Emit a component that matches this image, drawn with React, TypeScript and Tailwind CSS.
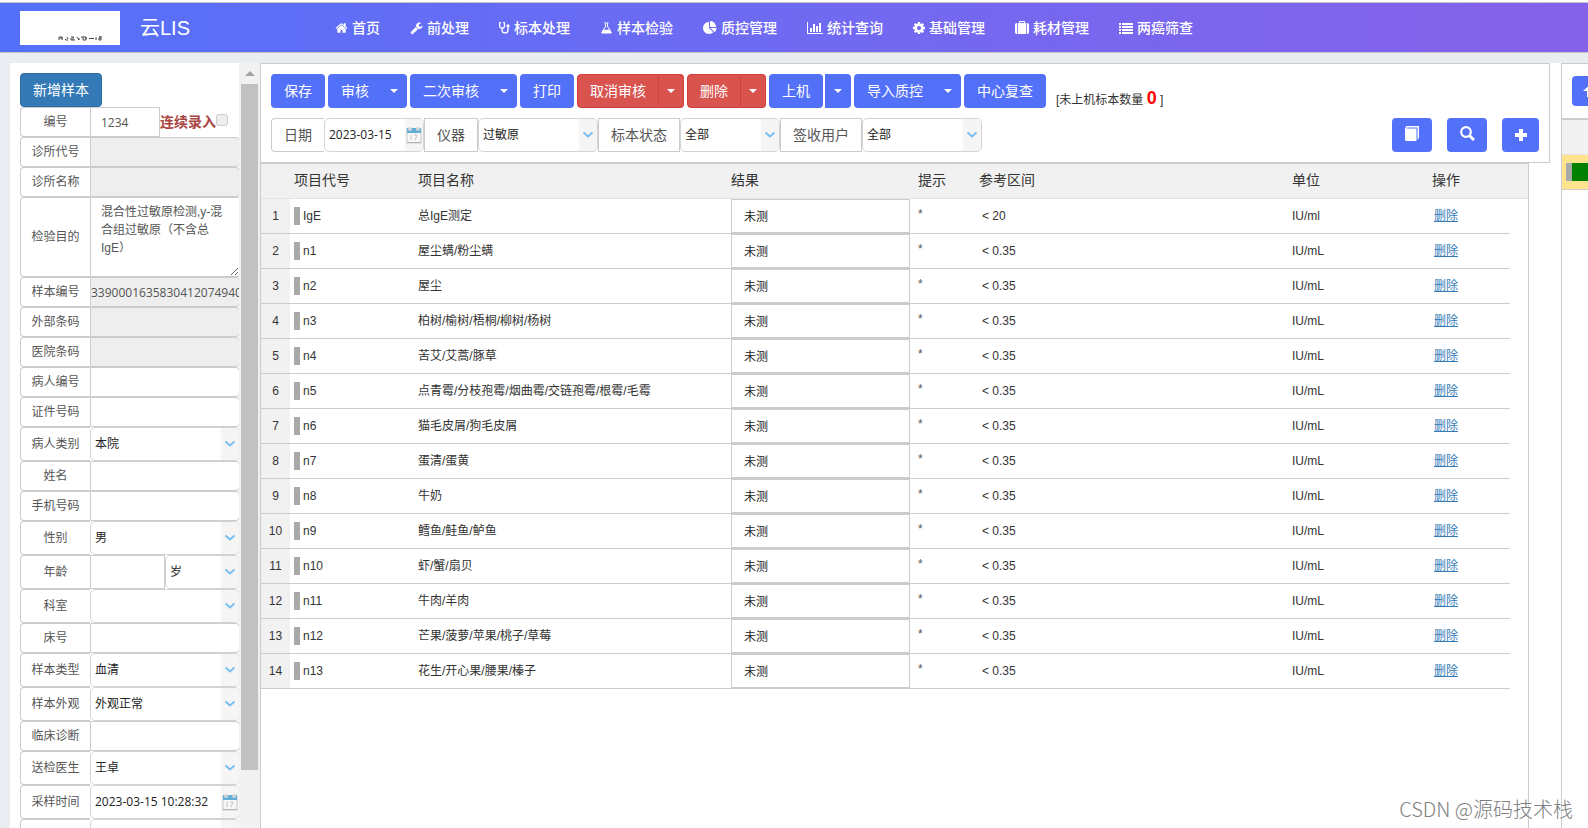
import { useState } from "react"
import type { ReactNode } from "react"

type NavEntry = {
  label: string
  width: number
  box: string
  icon: ReactNode
}

type FieldType = "text" | "readonly" | "select" | "purpose" | "number" | "age" | "datetime"

type Field = {
  label: string
  type: FieldType
  value?: string
}

const NAV: NavEntry[] = [
  {
    label: "首页",
    width: 13,
    box: "0 0 1792 1792",
    icon: <path d="M1472 992v480q0 26-19 45t-45 19h-384v-384h-256v384h-384q-26 0-45-19t-19-45v-480q0-1 .5-3t.5-3l575-474 575 474q1 2 1 6zm223-69l-62 74q-8 9-21 11h-3q-13 0-21-7l-692-577-692 577q-12 8-24 7-13-2-21-11l-62-74q-8-10-7-23.5t11-21.5l719-599q32-26 76-26t76 26l244 204v-195q0-14 9-23t23-9h192q14 0 23 9t9 23v408l219 182q10 8 11 21.5t-7 23.5z" />
  },
  {
    label: "前处理",
    width: 13,
    box: "0 0 1792 1792",
    icon: <path d="M448 1472q0-26-19-45t-45-19-45 19-19 45 19 45 45 19 45-19 19-45zm644-420l-682 682q-37 37-90 37-52 0-91-37l-106-108q-38-36-38-90 0-53 38-91l681-681q39 98 114.5 173.5t173.5 114.5zm634-435q0 39-23 106-47 134-164.5 217.5t-258.5 83.5q-185 0-316.5-131.5t-131.5-316.5 131.5-316.5 316.5-131.5q58 0 121.5 16.5t107.5 46.5q16 11 16 28t-16 28l-293 169v224l193 107q5-3 79-48.5t135.5-81 70.5-35.5q15 0 23.5 10t8.5 25z" />
  },
  {
    label: "标本处理",
    width: 11,
    box: "0 0 1408 1792",
    icon: (
      <g fill="none" stroke="currentColor" strokeWidth="170" strokeLinecap="round" strokeLinejoin="round">
        <path d="M190 210H80v420q0 270 310 290 310-20 310-290V210H590" />
        <path d="M390 930v240q0 350 380 350t380-350V780" />
        <circle cx="1150" cy="620" r="130" />
      </g>
    )
  },
  {
    label: "样本检验",
    width: 13,
    box: "0 0 1792 1792",
    icon: <path d="M1591 1448q56 89 21.5 152.5t-140.5 63.5h-1152q-106 0-140.5-63.5t21.5-152.5l503-793v-399h-64q-26 0-45-19t-19-45 19-45 45-19h512q26 0 45 19t19 45-19 45-45 19h-64v399zm-779-725l-272 429h712l-272-429-20-31v-436h-128v436z" />
  },
  {
    label: "质控管理",
    width: 14,
    box: "0 0 1792 1792",
    icon: <path d="M768 890l546 546q-106 108-247.5 168t-298.5 60q-209 0-385.5-103t-279.5-279.5-103-385.5 103-385.5 279.5-279.5 385.5-103v762zm187 6h773q0 157-60 298.5t-168 247.5zm709-128h-768v-768q209 0 385.5 103t279.5 279.5 103 385.5z" />
  },
  {
    label: "统计查询",
    width: 16,
    box: "0 0 2048 1792",
    icon: <path d="M640 896v512h-256v-512h256zm384-512v1024h-256v-1024h256zm1024 1152v128h-2048v-1536h128v1408h1920zm-640-896v768h-256v-768h256zm384-384v1152h-256v-1152h256z" />
  },
  {
    label: "基础管理",
    width: 12,
    box: "128 128 1536 1536",
    icon: <path d="M1152 896q0-106-75-181t-181-75-181 75-75 181 75 181 181 75 181-75 75-181zm512-109v222q0 12-8 23t-20 13l-185 28q-19 54-39 91 35 50 107 138 10 12 10 25t-9 23q-27 37-99 108t-94 71q-12 0-26-9l-138-108q-44 23-91 38-16 136-29 186-7 28-36 28h-222q-14 0-24.5-8.5t-11.5-21.5l-28-184q-49-16-90-37l-141 107q-10 9-25 9-14 0-25-11-126-114-165-168-7-10-7-23 0-12 8-23 15-21 51-66.5t54-70.5q-27-50-41-99l-183-27q-13-2-21-12.5t-8-23.5v-222q0-12 8-23t19-13l186-28q14-46 39-92-40-57-107-138-10-12-10-24 0-10 9-23 26-36 98.5-107.5t94.5-71.5q13 0 26 10l138 107q44-23 91-38 16-136 29-186 7-28 36-28h222q14 0 24.5 8.5t11.5 21.5l28 184q49 16 90 37l142-107q9-9 24-9 13 0 25 10 129 119 165 170 7 8 7 22 0 12-8 23-15 21-51 66.5t-54 70.5q26 50 41 98l183 28q13 2 21 12.5t8 23.5z" />
  },
  {
    label: "耗材管理",
    width: 14,
    box: "0 0 1792 1792",
    icon: <path d="M640 256h512v-128h-512v128zm-352 0v1408h-64q-92 0-158-66t-66-158v-960q0-92 66-158t158-66h64zm1120 0v1408h-1024v-1408h128v-160q0-40 28-68t68-28h576q40 0 68 28t28 68v160h128zm384 224v960q0 92-66 158t-158 66h-64v-1408h64q92 0 158 66t66 158z" />
  },
  {
    label: "两癌筛查",
    width: 14,
    box: "0 0 14 14",
    icon: <path d="M0 2h2v2H0zM3 2h11v2H3zM0 5h2v2H0zM3 5h11v2H3zM0 8h2v2H0zM3 8h11v2H3zM0 11h2v2H0zM3 11h11v2H3z" />
  }
]

const FIELDS: Field[] = [
  { label: "编号", type: "number", value: "1234" },
  { label: "诊所代号", type: "readonly" },
  { label: "诊所名称", type: "readonly" },
  { label: "检验目的", type: "purpose", value: "混合性过敏原检测,y-混合组过敏原（不含总IgE）" },
  { label: "样本编号", type: "readonly", value: "3390001635830412074940" },
  { label: "外部条码", type: "readonly" },
  { label: "医院条码", type: "readonly" },
  { label: "病人编号", type: "text" },
  { label: "证件号码", type: "text" },
  { label: "病人类别", type: "select", value: "本院" },
  { label: "姓名", type: "text" },
  { label: "手机号码", type: "text" },
  { label: "性别", type: "select", value: "男" },
  { label: "年龄", type: "age", value: "岁" },
  { label: "科室", type: "select", value: "" },
  { label: "床号", type: "text" },
  { label: "样本类型", type: "select", value: "血清" },
  { label: "样本外观", type: "select", value: "外观正常" },
  { label: "临床诊断", type: "text" },
  { label: "送检医生", type: "select", value: "王卓" },
  { label: "采样时间", type: "datetime", value: "2023-03-15 10:28:32" },
  { label: "", type: "datetime", value: "" }
]

const ITEMS = [
  { code: "IgE", name: "总IgE测定", range: "< 20", unit: "IU/ml" },
  { code: "n1", name: "屋尘螨/粉尘螨", range: "< 0.35", unit: "IU/mL" },
  { code: "n2", name: "屋尘", range: "< 0.35", unit: "IU/mL" },
  { code: "n3", name: "柏树/榆树/梧桐/柳树/杨树", range: "< 0.35", unit: "IU/mL" },
  { code: "n4", name: "苦艾/艾蒿/豚草", range: "< 0.35", unit: "IU/mL" },
  { code: "n5", name: "点青霉/分枝孢霉/烟曲霉/交链孢霉/根霉/毛霉", range: "< 0.35", unit: "IU/mL" },
  { code: "n6", name: "猫毛皮屑/狗毛皮屑", range: "< 0.35", unit: "IU/mL" },
  { code: "n7", name: "蛋清/蛋黄", range: "< 0.35", unit: "IU/mL" },
  { code: "n8", name: "牛奶", range: "< 0.35", unit: "IU/mL" },
  { code: "n9", name: "鳕鱼/鲑鱼/鲈鱼", range: "< 0.35", unit: "IU/mL" },
  { code: "n10", name: "虾/蟹/扇贝", range: "< 0.35", unit: "IU/mL" },
  { code: "n11", name: "牛肉/羊肉", range: "< 0.35", unit: "IU/mL" },
  { code: "n12", name: "芒果/菠萝/苹果/桃子/草莓", range: "< 0.35", unit: "IU/mL" },
  { code: "n13", name: "花生/开心果/腰果/榛子", range: "< 0.35", unit: "IU/mL" }
]

function CalendarIcon() {
  return (
    <svg width="16" height="18" viewBox="0 0 16 18" aria-hidden="true">
      <rect x="1" y="3" width="14" height="14" fill="#f7f7f7" stroke="#c9c9c9" />
      <rect x="1" y="2" width="14" height="5" fill="#62aed6" />
      <circle cx="4" cy="3" r="2" fill="#d4d4d4" />
      <circle cx="12" cy="3" r="2" fill="#d4d4d4" />
      <path d="M5 9v5M8 9h3l-2 5" fill="none" stroke="#c4c4c4" />
      <path d="M1 16.5h14" stroke="#b5b5b5" />
    </svg>
  )
}

function Combo({ label, value, className }: { label: string; value: string; className: string }) {
  return (
    <div className={`relative flex h-[34px] overflow-hidden rounded-[5px] border border-[#d4d4d4] bg-white ${className}`}>
      <select
        aria-label={label}
        defaultValue={value}
        className="w-full min-w-0 appearance-none bg-transparent pl-1 text-xs text-[#222] outline-none"
      >
        <option>{value}</option>
      </select>
      <span className="pointer-events-none absolute inset-y-0 right-0 flex w-[18px] items-center justify-center bg-[#f5f5f5]">
        <svg width="12" height="8" viewBox="0 0 12 8" aria-hidden="true">
          <path d="M1.500 1.500L6 5.500L10.500 1.500" fill="none" stroke="#78bff0" strokeWidth="2" />
        </svg>
      </span>
    </div>
  )
}

function DateBox({ label, value, className }: { label: string; value: string; className: string }) {
  return (
    <div className={`flex h-[34px] overflow-hidden rounded-[5px] border border-[#d4d4d4] bg-white ${className}`}>
      <input
        aria-label={label}
        defaultValue={value}
        className="w-full min-w-0 flex-1 pl-1 font-['Open_Sans','Noto_Sans_CJK_SC',sans-serif] text-xs text-[#222] outline-none"
      />
      <button aria-label="选择日期" className="flex w-[18px] shrink-0 items-center justify-center bg-[#f5f5f5]">
        <CalendarIcon />
      </button>
    </div>
  )
}

function FieldControl({ field, id }: { field: Field; id: string }) {

  const [checked, setChecked] = useState(false)

  if (field.type === "select") {
    return <Combo label={field.label} value={field.value ?? ""} className="flex-1" />
  }

  if (field.type === "datetime") {
    return <DateBox label={field.label || "时间"} value={field.value ?? ""} className="flex-1" />
  }

  if (field.type === "age") {
    return (
      <>
        <input id={id} className="w-[75px] border border-[#ccc] outline-none" />
        <Combo label="年龄单位" value="岁" className="flex-1" />
      </>
    )
  }

  if (field.type === "number") {
    return (
      <>
        <input
          id={id}
          defaultValue={field.value}
          className="h-[30px] w-[70px] border border-[#ccc] pl-2.5 font-['Open_Sans',sans-serif] text-xs text-[#555] outline-none"
        />
        <label className="flex items-center text-sm font-bold text-[#a94442]">
          连续录入
          <input
            type="checkbox"
            checked={checked}
            onChange={(e) => setChecked(e.target.checked)}
            className="mb-1 size-3 appearance-none rounded-[3px] border border-[#ccc] bg-[#eee]"
          />
        </label>
      </>
    )
  }

  if (field.type === "purpose") {
    return (
      <textarea
        id={id}
        defaultValue={field.value}
        className="h-[80px] min-w-0 flex-1 resize overflow-hidden border border-[#ccc] px-2.5 py-[5px] text-xs leading-[18px] text-[#555] outline-none"
      />
    )
  }

  if (field.type === "readonly") {
    return (
      <input
        id={id}
        readOnly
        defaultValue={field.value}
        className="h-[30px] min-w-0 flex-1 rounded-r border border-[#ccc] bg-[#eee] font-['Open_Sans',sans-serif] text-xs text-[#555] outline-none"
      />
    )
  }

  return (
    <input
      id={id}
      defaultValue={field.value}
      className="h-[30px] min-w-0 flex-1 rounded-r border border-[#ccc] px-2.5 text-xs text-[#555] outline-none"
    />
  )

}

function Caret() {
  return <span className="size-0 border-x-4 border-t-4 border-x-transparent border-t-white" />
}

function BlueButton({ text, caret }: { text: string; caret?: boolean }) {
  return (
    <button className="flex h-[34px] items-center rounded bg-[#5370f9] pl-[13px] text-sm whitespace-nowrap text-white">
      <span className="pr-[13px]">{text}</span>
      {caret && (
        <span className="flex w-[25px] justify-center pr-px">
          <Caret />
        </span>
      )}
    </button>
  )
}

function RedButton({ text }: { text: string }) {
  return (
    <div className="flex h-[34px] text-sm whitespace-nowrap text-white">
      <button className="rounded-l border border-[#d43f3a] bg-[#d9534f] px-3">{text}</button>
      <button
        aria-label={`${text}选项`}
        className="flex w-[25px] items-center justify-center rounded-r border border-l-0 border-[#d43f3a] bg-[#d9534f]"
      >
        <Caret />
      </button>
    </div>
  )
}

function FilterLabel({ text, className }: { text: string; className: string }) {
  return (
    <span className={`flex h-[34px] items-center justify-center border border-[#ccc] text-sm whitespace-nowrap text-[#555] ${className}`}>
      {text}
    </span>
  )
}

function Header() {
  return (
    <header className="mt-0.5 flex h-[51px] shrink-0 items-center border-y border-[#c5c5cb] bg-gradient-to-r from-[#5370f9] to-[#8662ea] pl-5 text-white">

      <div className="flex h-[34px] w-[100px] shrink-0 items-end justify-end bg-white pr-[18px] pb-1">
        <svg width="44" height="5" viewBox="0 0 44 5" stroke="#444" fill="none" aria-hidden="true">
          <path d="M1 1h3v3M1 1v3M2 2h3M7 3l1 1h2M9 1l1 2M13 1h3M13 2v2h4M15 1v3M19 1l2 3M23 1h2v3M20 3h2M25 1h3v3h-3M27 2h2M31 2.500h5M38 1v3M41 1h3M40 3h4M42 0v5" />
        </svg>
      </div>

      <div className="w-[200px] shrink-0 pl-5 text-xl">云LIS</div>

      <nav className="flex">
        {NAV.map((item) => (
          <a key={item.label} href="#" className="flex items-center gap-1 px-[15px] text-sm font-medium whitespace-nowrap">
            <svg width={item.width} height="14" viewBox={item.box} fill="currentColor" aria-hidden="true">
              {item.icon}
            </svg>
            {item.label}
          </a>
        ))}
      </nav>

    </header>
  )
}

function Sidebar() {
  return (
    <aside className="flex w-[250px] shrink-0 bg-white">

      <div className="w-[229px] shrink-0 overflow-hidden">
        <div className="w-[230px] pt-2.5 pl-2.5">
          <button className="h-[34px] w-[82px] rounded border border-[#2e6da4] bg-[#337ab7] text-sm text-white">
            新增样本
          </button>
          {FIELDS.map((field, i) => (
            <div key={i} className="flex">
              <label
                htmlFor={`field-${i}`}
                className="flex w-[70px] shrink-0 items-center justify-center rounded-l border border-r-0 border-[#ccc] text-xs text-[#555]"
              >
                {field.label}
              </label>
              <FieldControl field={field} id={`field-${i}`} />
            </div>
          ))}
        </div>
      </div>

      {/* Scrollbar */}
      <div className="flex flex-1 flex-col items-center bg-[#f1f1f1]">
        <div className="flex h-[21px] shrink-0 items-center">
          <span className="size-0 border-x-[5px] border-b-[5px] border-x-transparent border-b-[#a3a3a3]" />
        </div>
        <div className="h-[90%] max-h-[686px] w-[17px] bg-[#c1c1c1]" />
      </div>

    </aside>
  )
}

function Toolbar() {
  return (
    <div className="mr-[11px] h-[100px] shrink-0 border border-[#ccc] bg-white px-2.5 pt-2.5">

      <div className="flex gap-[3px]">
        <BlueButton text="保存" />
        <BlueButton text="审核" caret />
        <BlueButton text="二次审核" caret />
        <BlueButton text="打印" />
        <RedButton text="取消审核" />
        <RedButton text="删除" />
        <div className="flex gap-0.5">
          <BlueButton text="上机" />
          <button aria-label="上机选项" className="flex w-[26px] items-center justify-center rounded-r bg-[#5370f9]">
            <Caret />
          </button>
        </div>
        <BlueButton text="导入质控" caret />
        <BlueButton text="中心复查" />
        <p className="self-end pl-[7px] text-xs whitespace-nowrap text-[#333]">
          [未上机标本数量 <b className="text-lg leading-5 text-[#f00]">0</b> ]
        </p>
      </div>

      <div className="mt-2.5 flex">
        <FilterLabel text="日期" className="w-[53px] rounded-l border-r-0" />
        <DateBox label="日期" value="2023-03-15" className="w-[100px]" />
        <FilterLabel text="仪器" className="w-[54px]" />
        <Combo label="仪器" value="过敏原" className="w-[120px]" />
        <FilterLabel text="标本状态" className="w-[82px]" />
        <Combo label="标本状态" value="全部" className="w-[100px]" />
        <FilterLabel text="签收用户" className="w-[82px]" />
        <Combo label="签收用户" value="全部" className="w-[120px]" />

        <div className="ml-auto flex gap-[15px]">
          <button aria-label="复制" className="flex h-[34px] w-10 items-center justify-center rounded bg-[#5370f9] pb-1">
            <svg width="14" height="15" viewBox="0 0 14 15" aria-hidden="true">
              <path d="M0 2.500L1.500 0H14v12l-1.500 1.500V1.500H2L1.500 2.500H11.500V15H1L0 14z" fill="#fff" />
            </svg>
          </button>
          <button aria-label="查询" className="flex h-[34px] w-10 items-center justify-center rounded bg-[#5370f9] pb-1">
            <svg width="15" height="15" viewBox="0 0 15 15" fill="none" stroke="#fff" aria-hidden="true">
              <circle cx="6" cy="6" r="4.800" strokeWidth="2.200" />
              <path d="M9.500 9.500L14 14" strokeWidth="3" />
            </svg>
          </button>
          <button aria-label="新增" className="flex h-[34px] w-[37px] items-center justify-center rounded bg-[#5370f9]">
            <svg width="12" height="12" viewBox="0 0 12 12" aria-hidden="true">
              <path d="M6 0v12M0 6h12" stroke="#fff" strokeWidth="4" />
            </svg>
          </button>
        </div>
      </div>

    </div>
  )
}

function ResultTable() {
  return (
    <div className="mr-8 flex-1 overflow-hidden border border-b-0 border-[#ccc] bg-white">
      <table className="w-full table-fixed border-separate border-spacing-0 text-left text-xs text-[#333]">

        <colgroup>
          <col className="w-[29px]" />
          <col className="w-[124px]" />
          <col className="w-[313px]" />
          <col className="w-[187px]" />
          <col className="w-[61px]" />
          <col />
          <col className="w-[140px]" />
          <col className="w-[82px]" />
          <col className="w-[18px]" />
        </colgroup>

        <thead>
          <tr className="h-[35px] bg-[#f1f1f1] text-sm [&>th]:border-b [&>th]:border-[#e4e4e4] [&>th]:px-1 [&>th]:pb-0.5 [&>th]:font-normal">
            <th></th>
            <th>项目代号</th>
            <th>项目名称</th>
            <th>结果</th>
            <th>提示</th>
            <th>参考区间</th>
            <th>单位</th>
            <th>操作</th>
            <th></th>
          </tr>
        </thead>

        <tbody>
          {ITEMS.map((item, i) => (
            <tr key={item.code} className="h-[35px] [&>td]:border-b [&>td]:border-[#ccc] [&>td]:px-1">
              <td className="bg-[#f1f1f1] text-center">{i + 1}</td>
              <td>
                <div className="flex items-center gap-[3px]">
                  <span className="h-[18px] w-1.5 bg-[#a9a9a9]" />
                  {item.code}
                </div>
              </td>
              <td className="whitespace-nowrap">{item.name}</td>
              <td>
                <input
                  aria-label={`${item.code} 结果`}
                  defaultValue="未测"
                  className="block h-[34px] w-full border border-[#ccc] px-3 pb-0.5 text-xs text-[#222] outline-none"
                />
              </td>
              <td className="pb-1 text-[#555]">*</td>
              <td>
                <span className="pl-[3px]">{item.range}</span>
              </td>
              <td>{item.unit}</td>
              <td>
                <a href="#" className="pl-0.5 text-[#337ab7] underline">删除</a>
              </td>
            </tr>
          ))}
        </tbody>

      </table>
    </div>
  )
}

function QueuePanel() {
  return (
    <div className="w-[27px] shrink-0 overflow-hidden border-t border-l border-[#ccc] bg-white">
      <div className="h-[56px] border-b-2 border-[#ccc] pt-3 pl-2.5">
        <button aria-label="上移" className="flex h-[30px] w-10 items-center rounded bg-[#5370f9] pl-[11px]">
          <svg width="13" height="12" viewBox="0 0 13 12" aria-hidden="true">
            <path d="M6.500 0L13 6H9v6H4V6H0z" fill="#fff" />
          </svg>
        </button>
      </div>
      <div className="h-[35px] border-b border-[#e4e4e4] bg-[#f1f1f1]" />
      <div className="flex h-[35px] items-center border-b border-[#ccc] bg-[#ffe48d] pl-1">
        <span className="h-[18px] w-1.5 bg-[#a9a9a9]" />
        <span className="h-[18px] flex-1 bg-[#008000]" />
      </div>
    </div>
  )
}

export default function App() {
  return (
    <div className="relative flex h-screen flex-col overflow-hidden bg-white font-['Liberation_Sans','Noto_Sans_CJK_SC',sans-serif]">

      <Header />

      <div className="flex min-h-0 flex-1 bg-[#e9edf1] pt-2.5 pl-2.5">
        <Sidebar />
        <main className="flex min-w-0 flex-1 flex-col bg-white">
          <Toolbar />
          <ResultTable />
        </main>
        <QueuePanel />
      </div>

      <div className="pointer-events-none absolute right-[15px] bottom-1 font-['Noto_Sans_CJK_SC',sans-serif] text-xl leading-[30px] font-light text-[#808080] [text-shadow:1px_1px_1px_#fff]">
        CSDN @源码技术栈
      </div>

    </div>
  )
}
